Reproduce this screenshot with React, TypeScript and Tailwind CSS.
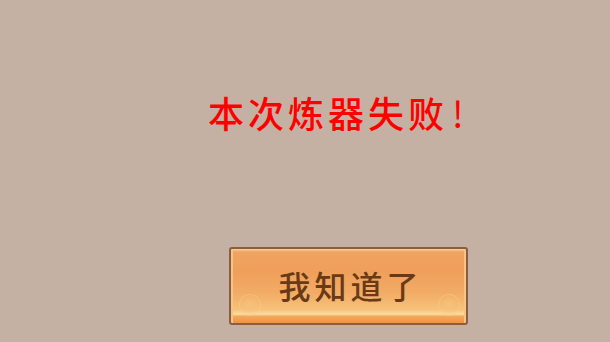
import React from "react";

export default function App() {
  return (
    <div
      className="w-[610px] h-[342px] bg-[#c5b1a3] flex flex-col items-start pl-[208px]"
      style={{ fontFamily: '"Noto Sans CJK SC", "Noto Sans", sans-serif' }}
    >
      <div className="mt-[92px] h-[40px] text-[36px] leading-[40px] font-medium text-[#ff0000] tracking-[4px] whitespace-nowrap">
        本次炼器失败<span className="tracking-normal font-normal pl-[4px]">!</span>
      </div>
      <button className="relative mt-[115px] ml-[21px] w-[239px] h-[78px] rounded-[3px] border-2 border-[#8a5e42] bg-[linear-gradient(to_bottom,#fad0a0_0%,#f0a461_4%,#ef9f5a_30%,#f2ac66_60%,#f6c27a_82%,#fcdca2_88%,#f3a95c_91%,#ec9444_100%)] overflow-hidden flex items-center justify-center shadow-[inset_2px_0_0_#f6c488,inset_-2px_0_0_#f6c488]">
        <span className="absolute left-[8px] bottom-[7px] w-[22px] h-[22px] rounded-full border border-[#f8cd8c]/50 bg-[radial-gradient(circle,#f7c07a_0%,transparent_70%)]" />
        <span className="absolute right-[6px] bottom-[7px] w-[22px] h-[22px] rounded-full border border-[#f8cd8c]/50 bg-[radial-gradient(circle,#f7c07a_0%,transparent_70%)]" />
        <span className="relative text-[32px] leading-none font-medium text-[#6a3a16] tracking-[4px] pl-[4px] -mt-[2px]">
          我知道了
        </span>
      </button>
    </div>
  );
}
